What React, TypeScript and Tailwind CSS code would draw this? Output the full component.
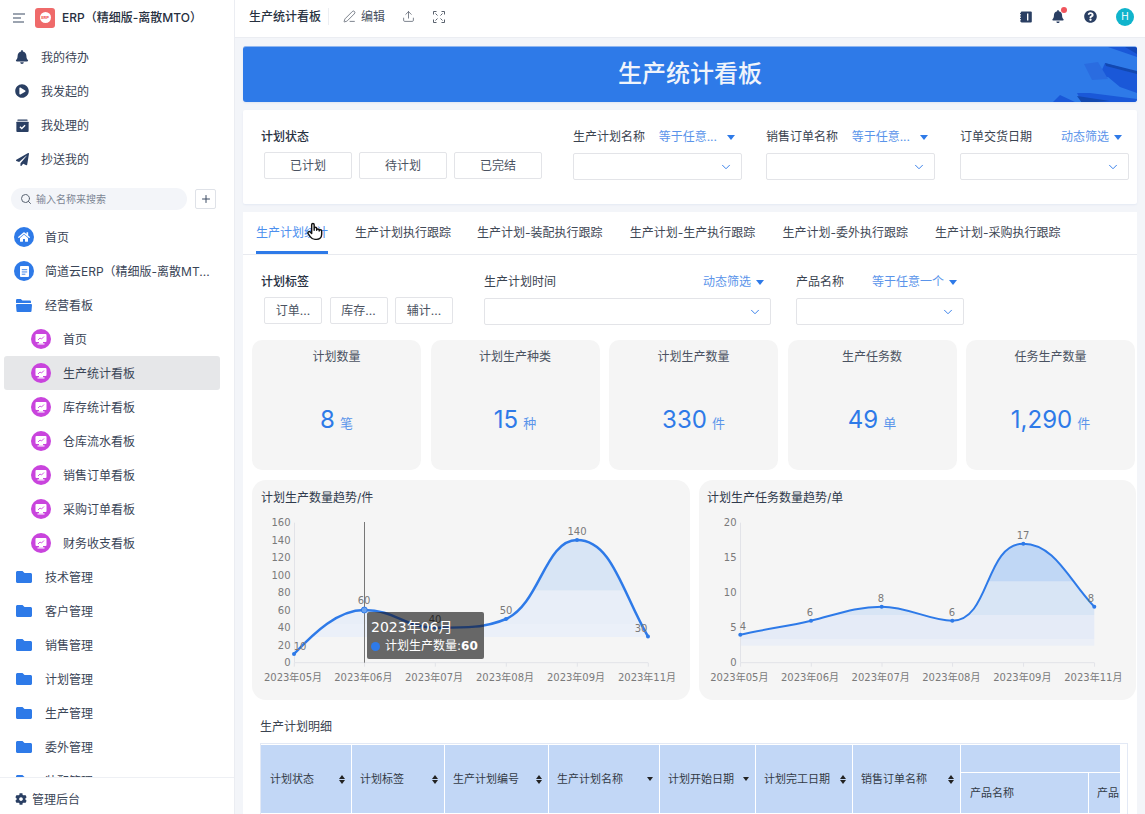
import { Plus, Search, ChevronDown, PenLine, Upload } from "lucide-react"
import { FaBell, FaCog, FaFolder, FaHome, FaPaperPlane, FaPlayCircle, FaQuestionCircle } from "react-icons/fa"

const FONT = "font-[family-name:Inter,Noto_Sans_CJK_SC,sans-serif]"
const CHART_FONT = "font-[family-name:DejaVu_Sans,Noto_Sans_CJK_SC,sans-serif]"
const ROW_TEXT = "pt-[2px] text-[12px] text-[#3a4557]"

function Triangle({ far }: { far?: boolean }) {
  return <span className={`inline-block h-0 w-0 border-x-[4.5px] border-t-[5px] border-x-transparent border-t-[#2e7ae8] ${far ? "ml-[10px]" : "ml-[5px]"}`} />
}

function MonitorBadge() {
  return (
    <svg viewBox="0 0 20 20" className="h-[20px] w-[20px] shrink-0">
      <circle cx="10" cy="10" r="10" fill="#c944dd" />
      <rect x="4.5" y="5" width="11" height="8" rx="1" fill="#fff" />
      <path d="M7 11l2-2 1.5 1L13 7.5" stroke="#c944dd" strokeWidth="0.9" fill="none" />
      <rect x="8" y="13" width="4" height="1.4" fill="#fff" />
      <rect x="6.5" y="14.4" width="7" height="1.1" fill="#fff" />
    </svg>
  )
}

function OpenFolder() {
  return (
    <svg viewBox="0 0 16 13" className="h-[13px] w-[16px] shrink-0">
      <path d="M0 1.2A1.2 1.2 0 0 1 1.2 0h3.6l1.6 1.6h7.2A1.2 1.2 0 0 1 15 2.8V4H0z" fill="#2e7ae8" />
      <path d="M1 5h14a1 1 0 0 1 1 1l-.5 6a1 1 0 0 1-1 1H1.5a1 1 0 0 1-1-1L0 6a1 1 0 0 1 1-1z" fill="#2e7ae8" />
    </svg>
  )
}

function FolderRow({ name, open }: { name: string; open?: boolean }) {
  return (
    <div className="flex h-[34px] items-center pl-[16px]">
      {open ? <OpenFolder /> : <FaFolder className="h-[16px] w-[16px] text-[#2e7ae8]" />}
      <span className={`ml-[13px] ${ROW_TEXT}`}>{name}</span>
    </div>
  )
}

function ChildRow({ name, active }: { name: string; active?: boolean }) {
  return (
    <div className={`ml-[4px] flex h-[34px] w-[216px] items-center rounded-[3px] pl-[27px] ${active ? "bg-[#e6e7e9]" : ""}`}>
      <MonitorBadge />
      <span className={`ml-[12px] ${ROW_TEXT}`}>{name}</span>
    </div>
  )
}

function Sidebar() {
  const top = [
    { name: "我的待办", icon: <FaBell className="h-[14px] w-[14px]" /> },
    { name: "我发起的", icon: <FaPlayCircle className="h-[14px] w-[14px]" /> },
    {
      name: "我处理的",
      icon: (
        <svg viewBox="0 0 14 14" className="h-[13px] w-[13px]">
          <rect x="1.5" y="0.5" width="11" height="1.5" rx="0.6" fill="currentColor" />
          <path d="M1 3h12a.6.6 0 0 1 .6.6V13a1 1 0 0 1-1 1H1.4a1 1 0 0 1-1-1V3.6A.6.6 0 0 1 1 3z" fill="currentColor" />
          <path d="M4.2 8.4l2 1.9 3.6-3.6" stroke="#fff" strokeWidth="1.4" fill="none" />
        </svg>
      ),
    },
    { name: "抄送我的", icon: <FaPaperPlane className="h-[13px] w-[13px]" /> },
  ]
  return (
    <div className="relative flex h-full w-[235px] shrink-0 flex-col overflow-hidden border-r border-[#ebedf2] bg-white">
      <div className="flex h-[38px] shrink-0 items-center pb-[3px] pl-[13px]">
        <svg viewBox="0 0 12 10" className="h-[10px] w-[12px]">
          <path d="M0 1h12M0 5h8M0 9h11" stroke="#3a4a63" strokeWidth="1.1" />
        </svg>
        <div className="ml-[10px] flex h-[20px] w-[20px] items-center justify-center rounded-[3px] bg-[#ef6a6a]">
          <div className="flex h-[11px] w-[11px] items-center justify-center rounded-full bg-white text-[4px] font-bold text-[#ef5050]">ERP</div>
        </div>
        <span className="ml-[7px] text-[12px] font-medium text-[#27303f]">ERP（精细版-离散MTO）</span>
      </div>
      <div className="mt-[2px]">
        {top.map(item => (
          <div key={item.name} className="flex h-[34px] items-center">
            <span className="flex w-[41px] justify-center pl-[3px] text-[#2a3f63]">{item.icon}</span>
            <span className={ROW_TEXT}>{item.name}</span>
          </div>
        ))}
      </div>
      <div className="mt-[12px] flex items-center pl-[11px]">
        <div className="flex h-[22px] w-[176px] items-center rounded-full bg-[#f3f5f9] pl-[9px]">
          <Search className="h-[12px] w-[12px] text-[#5a6472]" />
          <span className="ml-[4px] text-[10px] text-[#7c8594]">输入名称来搜索</span>
        </div>
        <div className="ml-[8px] flex h-[20px] w-[21px] items-center justify-center rounded-[2px] border border-[#dfe2e8]">
          <Plus className="h-[12px] w-[12px] text-[#3a4a63]" />
        </div>
      </div>
      <div className="mt-[10px]">
        <div className="flex h-[34px] items-center pl-[14px]">
          <span className="flex h-[20px] w-[20px] items-center justify-center rounded-full bg-[#2e7ae8]">
            <FaHome className="h-[12px] w-[12px] text-white" />
          </span>
          <span className={`ml-[11px] ${ROW_TEXT}`}>首页</span>
        </div>
        <div className="flex h-[34px] items-center pl-[14px]">
          <span className="flex h-[20px] w-[20px] items-center justify-center rounded-full bg-[#2e7ae8]">
            <svg viewBox="0 0 10 12" className="h-[11px] w-[9px]">
              <path d="M1 0h8a1 1 0 0 1 1 1v10a1 1 0 0 1-1 1H1a1 1 0 0 1-1-1V1a1 1 0 0 1 1-1z" fill="#fff" />
              <path d="M2 4h6M2 6.5h6M2 9h4" stroke="#2e7ae8" strokeWidth="1" />
            </svg>
          </span>
          <span className={`ml-[11px] ${ROW_TEXT}`}>简道云ERP（精细版-离散MT...</span>
        </div>
        <FolderRow name="经营看板" open />
        <ChildRow name="首页" />
        <ChildRow name="生产统计看板" active />
        <ChildRow name="库存统计看板" />
        <ChildRow name="仓库流水看板" />
        <ChildRow name="销售订单看板" />
        <ChildRow name="采购订单看板" />
        <ChildRow name="财务收支看板" />
        {["技术管理", "客户管理", "销售管理", "计划管理", "生产管理", "委外管理", "装配管理"].map(n => (
          <FolderRow key={n} name={n} />
        ))}
      </div>
      <div className="absolute bottom-0 left-0 flex h-[37px] w-full items-center border-t border-[#eef0f4] bg-white pl-[15px] pt-[6px]">
        <FaCog className="h-[12px] w-[12px] text-[#2a3f63]" />
        <span className={`ml-[5px] ${ROW_TEXT}`}>管理后台</span>
      </div>
    </div>
  )
}

function TopBar() {
  return (
    <div className="flex h-[38px] shrink-0 items-center border-b border-[#ebedf2] bg-white pb-[4px] pl-[14px]">
      <span className="text-[12px] font-medium text-[#27303f]">生产统计看板</span>
      <span className="ml-[7px] h-[17px] w-px bg-[#eceef2]" />
      <PenLine className="ml-[14px] h-[13px] w-[13px] text-[#47505e]" strokeWidth={1.3} />
      <span className="ml-[5px] text-[12px] text-[#47505e]">编辑</span>
      <Upload className="ml-[17px] h-[13px] w-[13px] text-[#47505e]" strokeWidth={1.3} />
      <svg viewBox="0 0 12 12" className="ml-[18px] h-[12px] w-[12px]" fill="none" stroke="#47505e" strokeWidth="0.9">
        <path d="M.5 3.5v-3h3M8.5.5h3v3M11.5 8.5v3h-3M3.5 11.5h-3v-3" />
        <path d="M2.5 2.5l2 2M9.5 2.5l-2 2M9.5 9.5l-2-2M2.5 9.5l2-2" />
      </svg>
      <div className="ml-auto flex items-center pr-[11px]">
        <svg viewBox="0 0 12 12" className="h-[12px] w-[12px]">
          <rect x="0.8" y="0.5" width="11" height="11" rx="1" fill="#2a3f63" />
          <path d="M0 2.5h2M0 5h2M0 7.5h2M0 10h2" stroke="#2a3f63" strokeWidth="0.9" />
          <rect x="7" y="2.5" width="1.4" height="7" fill="#fff" />
        </svg>
        <span className="relative ml-[20px] block h-[13px] w-[12px]">
          <FaBell className="h-[13px] w-[12px] text-[#2a3f63]" />
          <span className="absolute right-[-3px] top-[-3px] h-[6px] w-[6px] rounded-full bg-[#f0545c]" />
        </span>
        <FaQuestionCircle className="ml-[20px] h-[13px] w-[13px] text-[#2a3f63]" />
        <span className="ml-[19px] flex h-[18px] w-[18px] items-center justify-center rounded-full bg-[#10b4cc] text-[10px] text-white">H</span>
      </div>
    </div>
  )
}

function Banner() {
  return (
    <div className="relative ml-[8px] mt-[8px] flex h-[56px] w-[894px] shrink-0 items-center justify-center overflow-hidden rounded-[3px] border-t border-[#8fb6f0] bg-[#2e7ae8] pb-[2px] shadow-[0_1px_2px_#dfe6f2]">
      <svg viewBox="1000 46 137 56" className="absolute right-0 top-0 h-[56px] w-[137px]">
        <polygon points="1108,46 1137,46 1137,56" fill="#1a58d8" />
        <polygon points="1125,46 1137,46 1137,53" fill="#1248b8" />
        <polygon points="1105,62 1137,71 1137,92 1120,86 1108,76 1098,78" fill="#1a58d8" />
        <polygon points="1105,62 1137,70 1137,73 1106,65" fill="#1248b0" />
        <polygon points="1084,63 1098,61 1108,78 1092,79" fill="#2a6ce0" />
        <polygon points="1077,92 1090,92 1137,98 1137,102 1082,102" fill="#1a58d8" />
        <polygon points="1077,95 1110,100 1082,102" fill="#1248b0" />
        <polygon points="1052,102 1060,94 1077,102" fill="#1a58d8" />
      </svg>
      <span className="relative text-[24px] font-medium leading-none text-[#f0f4fb]">生产统计看板</span>
    </div>
  )
}

function Pills({ items, wide }: { items: string[]; wide?: boolean }) {
  return (
    <div className={`mt-[7px] flex pl-[3px] ${wide ? "gap-[7px]" : "gap-[7.5px]"}`}>
      {items.map(t => (
        <div key={t} className={`flex h-[27px] items-center justify-center rounded-[2px] border border-[#e3e4e8] text-[12px] text-[#4a5261] ${wide ? "w-[88px]" : "w-[58px]"}`}>
          {t}
        </div>
      ))}
    </div>
  )
}

function Field({ label, mode, width, far }: { label: string; mode: string; width: string; far?: boolean }) {
  return (
    <div className={`shrink-0 ${width}`}>
      <div className="flex h-[18px] items-center justify-between pr-[7px] pt-[2px] text-[12px]">
        <span className="text-[#3a4350]">{label}</span>
        <span className="flex items-center text-[#5a94ea]">
          {mode}
          <Triangle far={far} />
        </span>
      </div>
      <div className="mt-[8px] flex h-[27px] items-center justify-end rounded-[2px] border border-[#e3e4e8] pr-[8px]">
        <ChevronDown className="h-[14px] w-[14px] text-[#2e7ae8]" strokeWidth={1.6} />
      </div>
    </div>
  )
}

function StatusCard() {
  return (
    <div className="ml-[8px] mt-[8px] flex h-[94px] w-[894px] shrink-0 rounded-[2px] bg-white pl-[18px] pt-[17px] shadow-[0_1px_2px_#e4e9f3]">
      <div className="w-[312px] shrink-0">
        <div className="flex h-[18px] items-center pt-[2px] text-[12px] font-medium text-[#27303f]">计划状态</div>
        <Pills items={["已计划", "待计划", "已完结"]} wide />
      </div>
      <div className="flex gap-[24px]">
        <Field label="生产计划名称" mode="等于任意..." width="w-[169px]" far />
        <Field label="销售订单名称" mode="等于任意..." width="w-[169px]" far />
        <Field label="订单交货日期" mode="动态筛选" width="ml-[1px] w-[169px]" />
      </div>
    </div>
  )
}

function Tabs() {
  const tabs = [
    { t: "生产计划统计", w: "mr-[1px] w-[72px]" },
    { t: "生产计划执行跟踪", w: "w-[96px]" },
    { t: "生产计划-装配执行跟踪", w: "w-[126.7px]" },
    { t: "生产计划-生产执行跟踪", w: "w-[126.7px]" },
    { t: "生产计划-委外执行跟踪", w: "w-[126.7px]" },
    { t: "生产计划-采购执行跟踪", w: "w-[126.7px]" },
  ]
  return (
    <div className="relative flex h-[43px] gap-[26px] border-b border-[#e8eaef] pl-[13px]">
      {tabs.map((tab, i) => (
        <div key={tab.t} className={`flex h-[42px] shrink-0 items-center whitespace-nowrap text-[12px] ${tab.w} ${i === 0 ? "border-b-[3px] border-[#2e7ae8] pt-[3px] text-[#4d8fee]" : "text-[#3f4856]"}`}>
          {tab.t}
        </div>
      ))}
      <svg viewBox="0 0 24 24" className="absolute left-[62px] top-[9px] h-[20px] w-[20px]" fill="#fff" stroke="#111" strokeWidth="1.7" strokeLinejoin="round">
        <path d="M8 13V4.5a1.5 1.5 0 0 1 3 0V11l0-2a1.5 1.5 0 0 1 3 0v2a1.5 1.5 0 0 1 3 0v1a1.5 1.5 0 0 1 3 0v4c0 3.5-2.5 6-6 6h-2c-2.5 0-4-1-5.5-3L3.6 15a1.6 1.6 0 0 1 2.6-1.8L8 15z" />
      </svg>
    </div>
  )
}

function Kpi({ title, value, unit }: { title: string; value: string; unit: string }) {
  return (
    <div className="h-[130px] w-[169px] shrink-0 rounded-[10px] bg-[#f5f5f5] pt-[8px] text-center">
      <div className="text-[12px] leading-[18px] text-[#4a5261]">{title}</div>
      <div className="mt-[37px] flex items-baseline justify-center text-[#2e7ae8]">
        <span className="text-[24px] leading-[34px]">{value}</span>
        <span className="ml-[5px] text-[13px] text-[#5a94ea]">{unit}</span>
      </div>
    </div>
  )
}

type ChartProps = {
  title: string
  titleLeft: string
  id: string
  box: string
  width: string
  line: string
  x: number[]
  y: number[]
  ticks: { label: string; y: number }[]
  axisX: number
  strokeWidth: number
  labels: { t: string; x: number; y: number }[]
  bands: { from: number; to: number; fill: string }[]
  tooltip?: boolean
}

const MONTHS = ["2023年05月", "2023年06月", "2023年07月", "2023年08月", "2023年09月", "2023年11月"]

function TrendChart({ title, titleLeft, id, box, width, line, x, y, ticks, axisX, strokeWidth, labels, bands, tooltip }: ChartProps) {
  const [bx, by] = box.split(" ").map(Number)
  const baseY = 662.7
  const last = x[x.length - 1]
  return (
    <div className={`relative h-[220px] shrink-0 rounded-[14px] bg-[#f5f5f5] ${width}`}>
      <div className={`absolute top-[8px] pt-[1px] text-[12px] leading-[18px] text-[#2f3a4c] ${titleLeft}`}>{title}</div>
      <svg viewBox={box} className="absolute inset-0 h-full w-full">
        <defs>
          <clipPath id={id}>
            <path d={`${line} L${last},${baseY} L${x[0]},${baseY} Z`} />
          </clipPath>
        </defs>
        <g clipPath={`url(#${id})`}>
          {bands.map(b => (
            <rect key={b.from} x={bx} y={b.from} width="440" height={b.to - b.from} fill={b.fill} />
          ))}
        </g>
        <path d={`M${axisX},522.7 V${baseY} H${last}`} fill="none" stroke="#e2e3e8" strokeWidth="1" />
        {x.map(v => (
          <path key={v} d={`M${v + 0.3},${baseY} v4`} stroke="#e2e3e8" strokeWidth="1" />
        ))}
        {tooltip && <path d={`M364.5,522 V${baseY}`} stroke="#777" strokeWidth="1" />}
        <path d={line} fill="none" stroke="#2e7ae8" strokeWidth={strokeWidth} />
        {x.map((v, i) => (
          <circle key={v} cx={v} cy={y[i]} r={tooltip && i === 1 ? 3 : 2} fill={tooltip && i === 1 ? "#6aa2ef" : "#2e7ae8"} stroke={tooltip && i === 1 ? "#2e7ae8" : "none"} />
        ))}
        <g className={`${CHART_FONT} text-[10px]`} fill="#7a7a7a">
          {ticks.map(t => (
            <text key={t.label} x={axisX - 4} y={t.y + 3.5} textAnchor="end">
              {t.label}
            </text>
          ))}
          {x.map((v, i) => (
            <text key={v} x={v - 1} y={by + 201} textAnchor="middle">
              {MONTHS[i]}
            </text>
          ))}
          {labels.map(l => (
            <text key={l.t + l.x} x={l.x} y={l.y} textAnchor="middle">
              {l.t}
            </text>
          ))}
        </g>
        {tooltip && (
          <g>
            <clipPath id={`${id}-tip`}>
              <rect x="367" y="612" width="117" height="47" rx="2" />
            </clipPath>
            <rect x="367" y="612" width="117" height="47" rx="2" fill="#676767" />
            <g clipPath={`url(#${id}-tip)`}>
              <path d={line} fill="none" stroke="#1f3b6e" strokeWidth={strokeWidth} />
              <text x="435" y="623" textAnchor="middle" fill="#2a2a2a" className={`${CHART_FONT} text-[10px]`}>
                40
              </text>
            </g>
          </g>
        )}
      </svg>
      {tooltip && (
        <div className={`absolute left-[115px] top-[132px] h-[47px] w-[117px] pl-[4px] pt-[5px] text-white ${CHART_FONT}`}>
          <div className="text-[14px] leading-[20px]">2023年06月</div>
          <div className="flex items-center text-[12px] leading-[18px]">
            <span className="mr-[5px] h-[9px] w-[9px] shrink-0 rounded-full bg-[#2e7ae8]" />
            计划生产数量:<b className="font-bold">60</b>
          </div>
        </div>
      )}
    </div>
  )
}

const x1 = [294, 364.3, 435, 506, 577, 648]
const x2 = [740.3, 811, 881.7, 952.3, 1023.3, 1094.3]

function Charts() {
  return (
    <div className="ml-[9px] mt-[10px] flex gap-[9px]">
      <TrendChart
        title="计划生产数量趋势/件"
        titleLeft="left-[9px]"
        id="clip-a"
        box="252 480 438 220"
        width="w-[438px]"
        x={x1}
        y={[654, 610, 627.7, 619, 540, 636.5]}
        line="M294,654 C315,632 338,610 364.3,610 C395,610 405,627.7 435,627.7 C465,627.7 485,628 506,619 C540,604 545,540 577,540 C612,540 622,592 648,636.5"
        axisX={294.5}
        strokeWidth={2.5}
        ticks={[160, 140, 120, 100, 80, 60, 40, 20, 0].map(v => ({ label: String(v), y: 662.7 - v * 0.875 }))}
        labels={[
          { t: "10", x: 300, y: 650 },
          { t: "60", x: 364, y: 604 },
          { t: "50", x: 506, y: 614 },
          { t: "140", x: 577, y: 535 },
          { t: "30", x: 641, y: 632 },
        ]}
        bands={[
          { from: 522, to: 590.7, fill: "#d8e5f5" },
          { from: 590.7, to: 624, fill: "#e8eef8" },
          { from: 624, to: 637, fill: "#ebf0f9" },
        ]}
        tooltip
      />
      <TrendChart
        title="计划生产任务数量趋势/单"
        titleLeft="left-[8px]"
        id="clip-b"
        box="699 480 437 220"
        width="w-[437px]"
        x={x2}
        y={[634.7, 620.7, 606.7, 620.7, 543.7, 606.7]}
        line="M740.3,634.7 C765,629 790,626 811,620.7 C835,615 855,606.7 881.7,606.7 C908,606.7 930,620.7 952.3,620.7 C990,620.7 985,543.7 1023.3,543.7 C1055,543.7 1070,582 1094.3,606.7"
        axisX={740.5}
        strokeWidth={2}
        ticks={[20, 15, 10, 5, 0].map(v => ({ label: String(v), y: 662.7 - v * 7 }))}
        labels={[
          { t: "4", x: 743, y: 630 },
          { t: "6", x: 810, y: 616 },
          { t: "8", x: 881, y: 602 },
          { t: "6", x: 952, y: 616 },
          { t: "17", x: 1023, y: 539 },
          { t: "8", x: 1091, y: 602 },
        ]}
        bands={[
          { from: 522, to: 581.7, fill: "#c0d7f5" },
          { from: 581.7, to: 615, fill: "#d8e5f5" },
          { from: 615, to: 639, fill: "#e5ebf7" },
          { from: 639, to: 645.7, fill: "#ebeff7" },
        ]}
      />
    </div>
  )
}

function SortIcon({ down }: { down?: boolean }) {
  return (
    <span className="flex flex-col items-center gap-[1px]">
      {!down && <span className="h-0 w-0 border-x-[3px] border-b-[4px] border-x-transparent border-b-[#222]" />}
      <span className="h-0 w-0 border-x-[3px] border-t-[4px] border-x-transparent border-t-[#222]" />
    </span>
  )
}

function DetailTable() {
  const cols = [
    { t: "计划状态", w: "w-[90px]", pad: "pl-[9px]" },
    { t: "计划标签", w: "w-[92px]", pad: "pl-[8px]" },
    { t: "生产计划编号", w: "w-[103px]", pad: "pl-[8px]" },
    { t: "生产计划名称", w: "w-[110px]", pad: "pl-[8px]", down: true },
    { t: "计划开始日期", w: "w-[95px]", pad: "pl-[8px]", down: true },
    { t: "计划完工日期", w: "w-[96px]", pad: "pl-[8px]" },
    { t: "销售订单名称", w: "w-[107px]", pad: "pl-[8px]" },
  ]
  return (
    <div className="ml-[17px] mt-[18px] text-[#333a45]">
      <div className="text-[12px] leading-[18px] text-[#3a4350]">生产计划明细</div>
      <div className="mt-[7px] h-[90px] w-[868px] border-x border-t border-[#e3e9f5] pr-[7px] pt-[1px]">
        <div className="flex h-[68px] gap-[1px] text-[11px]">
          {cols.map(c => (
            <div key={c.t} className={`flex shrink-0 items-center justify-between bg-[#c2d7f6] pr-[6px] ${c.w} ${c.pad}`}>
              <span>{c.t}</span>
              <SortIcon down={c.down} />
            </div>
          ))}
          <div className="flex min-w-0 flex-1 flex-col gap-[1px] overflow-hidden">
            <div className="h-[27px] bg-[#c2d7f6]" />
            <div className="flex flex-1 gap-[1px]">
              <div className="flex w-[127px] shrink-0 items-center bg-[#c2d7f6] pl-[9px]">产品名称</div>
              <div className="flex min-w-0 flex-1 items-center overflow-hidden whitespace-nowrap bg-[#c2d7f6] pl-[8px]">产品</div>
            </div>
          </div>
        </div>
      </div>
    </div>
  )
}

export default function App() {
  return (
    <div className={`flex h-[814px] w-[1145px] overflow-hidden bg-[#f3f5f9] ${FONT}`}>
      <Sidebar />
      <div className="flex min-w-0 flex-1 flex-col">
        <TopBar />
        <Banner />
        <StatusCard />
        <div className="ml-[8px] mt-[8px] w-[894px] shrink-0 bg-white pb-[10px]">
          <Tabs />
          <div className="flex h-[85px] pl-[18px] pt-[17px]">
            <div className="w-[223px] shrink-0">
              <div className="flex h-[18px] items-center pt-[2px] text-[12px] font-medium text-[#27303f]">计划标签</div>
              <Pills items={["订单...", "库存...", "辅计..."]} />
            </div>
            <div className="flex gap-[25px]">
              <Field label="生产计划时间" mode="动态筛选" width="w-[287px]" />
              <Field label="产品名称" mode="等于任意一个" width="w-[168px]" />
            </div>
          </div>
          <div className="ml-[9px] flex gap-[9.5px]">
            <Kpi title="计划数量" value="8" unit="笔" />
            <Kpi title="计划生产种类" value="15" unit="种" />
            <Kpi title="计划生产数量" value="330" unit="件" />
            <Kpi title="生产任务数" value="49" unit="单" />
            <Kpi title="任务生产数量" value="1,290" unit="件" />
          </div>
          <Charts />
          <DetailTable />
        </div>
      </div>
    </div>
  )
}
